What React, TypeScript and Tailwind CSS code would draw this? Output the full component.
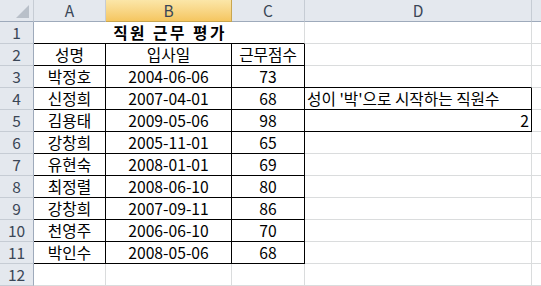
import React from "react";

const data: [string, string, string][] = [
  ["박정호", "2004-06-06", "73"],
  ["신정희", "2007-04-01", "68"],
  ["김용태", "2009-05-06", "98"],
  ["강창희", "2005-11-01", "65"],
  ["유현숙", "2008-01-01", "69"],
  ["최정렬", "2008-06-10", "80"],
  ["강창희", "2007-09-11", "86"],
  ["천영주", "2006-06-10", "70"],
  ["박인수", "2008-05-06", "68"],
];

const grid = "border-r border-b border-r-[#dadcdd] border-b-[#dadcdd]";
const tbl = "border-r border-b border-r-black border-b-black";

function RowHead({ n }: { n: number }) {
  return (
    <div className="h-[22px] flex items-center justify-center bg-[#e4e8ee] border-r border-b border-r-[#9eaabb] border-b-[#c6ccd4] text-[15.5px] text-[#3a4656]">
      {n}
    </div>
  );
}

export default function App() {
  const rows: React.ReactNode[] = [];
  data.forEach((r, i) => {
    const rn = i + 3;
    rows.push(<RowHead key={`h${rn}`} n={rn} />);
    rows.push(
      <div key={`a${rn}`} className={`h-[22px] flex items-center justify-center ${tbl}`}>{r[0]}</div>
    );
    rows.push(
      <div key={`b${rn}`} className={`h-[22px] flex items-center justify-center ${tbl}`}>{r[1]}</div>
    );
    rows.push(
      <div key={`c${rn}`} className={`h-[22px] flex items-center justify-center ${tbl}`}>{r[2]}</div>
    );
    let d: React.ReactNode = null;
    let dCls = grid;
    if (rn === 3) dCls = "border-r border-b border-r-[#dadcdd] border-b-black";
    if (rn === 4) {
      dCls = tbl + " justify-start pl-[2px]";
      d = "성이 '박'으로 시작하는 직원수";
    }
    if (rn === 5) {
      dCls = tbl + " justify-end pr-[2px]";
      d = "2";
    }
    rows.push(
      <div key={`d${rn}`} className={`h-[22px] flex items-center ${dCls}`}>{d}</div>
    );
    rows.push(<div key={`e${rn}`} className={`h-[22px] ${grid}`} />);
  });

  return (
    <div
      className="w-[541px] h-[286px] overflow-hidden bg-white text-black text-[15.7px] leading-none"
      style={{ fontFamily: '"Noto Sans CJK KR", "Noto Sans", sans-serif' }}
    >
      <div className="grid grid-cols-[34px_72px_126px_73px_227px_60px] w-[592px]">
        {/* header row */}
        <div className="h-[22px] relative bg-[#e4e8ee] border-r border-b border-r-[#c6ccd4] border-b-[#9eaabb]">
          <svg className="absolute right-[4px] bottom-[3px]" width="13" height="13" viewBox="0 0 13 13">
            <polygon points="13,0 13,13 0,13" fill="#b9c0c9" />
          </svg>
        </div>
        {["A", "B", "C", "D", "E"].map((c) => (
          <div
            key={c}
            className={
              c === "B"
                ? "h-[22px] flex items-center justify-center bg-gradient-to-b from-[#fbe6a8] to-[#f5c65f] border-r border-b border-r-[#c9a64f] border-b-[#c9a64f] text-[15.5px] text-[#3a4656]"
                : "h-[22px] flex items-center justify-center bg-[#e4e8ee] border-r border-b border-r-[#c6ccd4] border-b-[#9eaabb] text-[15.5px] text-[#3a4656]"
            }
          >
            {c === "E" ? "" : c}
          </div>
        ))}

        {/* row 1 */}
        <RowHead n={1} />
        <div className="col-span-3 h-[22px] flex items-center justify-center border-r border-b border-r-[#dadcdd] border-b-black font-bold tracking-[2.5px] pl-[2px]">
          직원 근무 평가
        </div>
        <div className={`h-[22px] ${grid}`} />
        <div className={`h-[22px] ${grid}`} />

        {/* row 2 */}
        <RowHead n={2} />
        <div className={`h-[22px] flex items-center justify-center ${tbl}`}>성명</div>
        <div className={`h-[22px] flex items-center justify-center ${tbl}`}>입사일</div>
        <div className={`h-[22px] flex items-center justify-center ${tbl}`}>근무점수</div>
        <div className={`h-[22px] ${grid}`} />
        <div className={`h-[22px] ${grid}`} />

        {rows}

        {/* row 12 */}
        <RowHead n={12} />
        <div className={`h-[22px] ${grid}`} />
        <div className={`h-[22px] ${grid}`} />
        <div className={`h-[22px] ${grid}`} />
        <div className={`h-[22px] ${grid}`} />
        <div className={`h-[22px] ${grid}`} />
      </div>
    </div>
  );
}
